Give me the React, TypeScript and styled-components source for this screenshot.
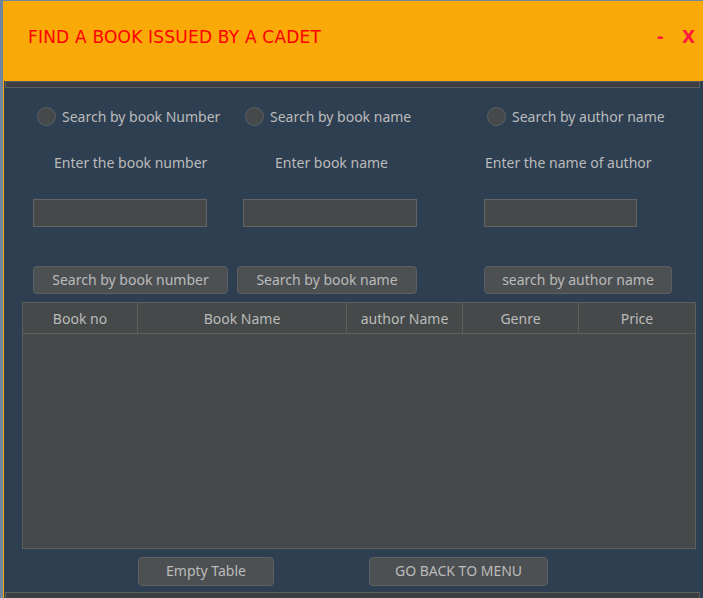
import React from "react";
import styled, { createGlobalStyle } from "styled-components";

const Global = createGlobalStyle`
  html, body { margin: 0; padding: 0; background: #6f86a3; }
  body { width: 703px; height: 598px; overflow: hidden; }
  * { box-sizing: border-box; }
`;

const Frame = styled.div`
  margin: 1px 0 0 3px;
  height: 597px;
  border-left: 1px solid #f9a908;
  background: #2e3f51;
  display: flex;
  flex-direction: column;
  font-family: "Noto Sans", "Open Sans", sans-serif;
  color: #bbbbbb;
`;

const Header = styled.div`
  height: 81px;
  background: #f9a908;
  display: flex;
  align-items: center;
  padding: 0 8px 0 25px;
  margin-left: -1px;
`;

const Title = styled.div`
  flex: 1;
  font-family: "DejaVu Sans", Verdana, sans-serif;
  font-size: 17px;
  letter-spacing: 0.2px;
  color: #ff0000;
  padding-bottom: 8px;
`;

const WinButton = styled.span<{ $gap: number }>`
  font-family: "DejaVu Sans", Verdana, sans-serif;
  font-weight: bold;
  font-size: 17px;
  color: #ff1a3c;
  margin-left: ${(p) => p.$gap}px;
  padding-bottom: 8px;
`;

const Separator = styled.div`
  height: 7px;
  margin: 0 3px 0 1px;
  background: #3c3f41;
  border: 1px solid #5b5f62;
`;

const Body = styled.div`
  flex: 1;
  display: flex;
  flex-direction: column;
  padding-left: 29px;
`;

const Row = styled.div<{ $top: number; $height: number }>`
  display: grid;
  grid-template-columns: 204px 247px 1fr;
  align-items: center;
  margin-top: ${(p) => p.$top}px;
  height: ${(p) => p.$height}px;
`;

const RadioItem = styled.label<{ $offset: number }>`
  display: flex;
  align-items: center;
  gap: 6px;
  margin-left: ${(p) => p.$offset}px;
  font-size: 14px;
  white-space: nowrap;
`;

const RadioCircle = styled.span`
  width: 19px;
  height: 19px;
  border-radius: 50%;
  background: #45494a;
  border: 1px solid #5c6164;
  flex: none;
`;

const Caption = styled.div<{ $offset: number }>`
  margin-left: ${(p) => p.$offset}px;
  font-size: 14px;
  line-height: 20px;
  white-space: nowrap;
`;

const Field = styled.div<{ $offset: number; $width: number }>`
  margin-left: ${(p) => p.$offset}px;
  width: ${(p) => p.$width}px;
  height: 28px;
  background: #45494a;
  border: 1px solid #646464;
`;

const Button = styled.button<{ $offset: number; $width: number }>`
  margin-left: ${(p) => p.$offset}px;
  width: ${(p) => p.$width}px;
  height: 100%;
  background: #4c5052;
  border: 1px solid #5e6060;
  border-radius: 4px;
  color: #bbbbbb;
  font-family: "Noto Sans", "Open Sans", sans-serif;
  font-size: 14px;
  padding: 0 0 2px;
  white-space: nowrap;
`;

const Table = styled.div`
  margin: 8px 0 0 -11px;
  width: 674px;
  height: 247px;
  background: #45494a;
  border: 1px solid #5e6060;
  display: flex;
  flex-direction: column;
`;

const HeadRow = styled.div`
  display: grid;
  grid-template-columns: 115px 209px 116px 116px 1fr;
  height: 31px;
  border-bottom: 1px solid #5e6060;
`;

const HeadCell = styled.div<{ $last?: boolean }>`
  display: flex;
  align-items: center;
  justify-content: center;
  font-size: 14px;
  border-right: ${(p) => (p.$last ? "none" : "1px solid #5e6060")};
`;

const BottomRow = styled.div`
  display: flex;
  height: 29px;
  margin-top: 8px;
`;

const BottomBar = styled.div`
  height: 6px;
  margin: 6px 3px 0 1px;
  background: #3c3f41;
  border: 1px solid #5b5f62;
  border-bottom: none;
`;

const cols = ["Book no", "Book Name", "author Name", "Genre", "Price"];

export default function App() {
  return (
    <>
      <Global />
      <Frame>
        <Header>
          <Title>FIND A BOOK ISSUED BY A CADET</Title>
          <WinButton $gap={0}>-</WinButton>
          <WinButton $gap={18}>X</WinButton>
        </Header>
        <Separator />
        <Body>
          <Row $top={19} $height={19}>
            <RadioItem $offset={4}>
              <RadioCircle />
              Search by book Number
            </RadioItem>
            <RadioItem $offset={8}>
              <RadioCircle />
              Search by book name
            </RadioItem>
            <RadioItem $offset={3}>
              <RadioCircle />
              Search by author name
            </RadioItem>
          </Row>
          <Row $top={27} $height={20}>
            <Caption $offset={21}>Enter the book number</Caption>
            <Caption $offset={38}>Enter book name</Caption>
            <Caption $offset={1}>Enter the name of author</Caption>
          </Row>
          <Row $top={26} $height={28}>
            <Field $offset={0} $width={174} />
            <Field $offset={6} $width={174} />
            <Field $offset={0} $width={153} />
          </Row>
          <Row $top={39} $height={28}>
            <Button $offset={0} $width={195}>Search by book number</Button>
            <Button $offset={0} $width={180}>Search by book name</Button>
            <Button $offset={0} $width={188}>search by author name</Button>
          </Row>
          <Table>
            <HeadRow>
              {cols.map((c, i) => (
                <HeadCell key={c} $last={i === cols.length - 1}>
                  {c}
                </HeadCell>
              ))}
            </HeadRow>
          </Table>
          <BottomRow>
            <Button $offset={105} $width={136}>Empty Table</Button>
            <Button $offset={95} $width={179}>GO BACK TO MENU</Button>
          </BottomRow>
        </Body>
        <BottomBar />
      </Frame>
    </>
  );
}
